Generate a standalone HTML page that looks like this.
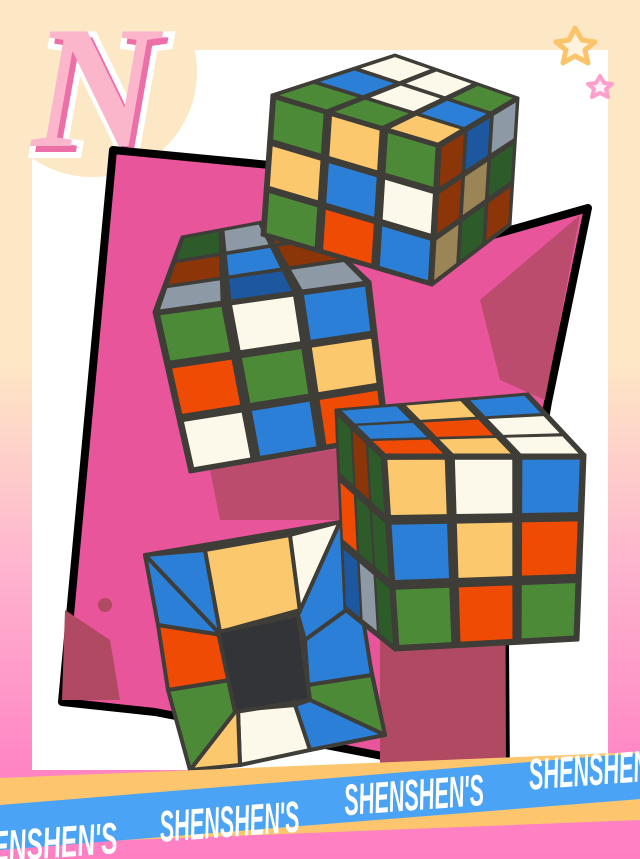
<!DOCTYPE html><html><head><meta charset="utf-8"><style>
html,body{margin:0;padding:0;width:640px;height:859px;overflow:hidden}
body{background:linear-gradient(#fde8c5 0%,#fde8c5 42%,#ffb6cf 65%,#ff84c4 90%,#ff7fc3 100%);position:relative;font-family:"Liberation Sans",sans-serif}
svg{position:absolute;left:0;top:0}
</style></head><body>
<svg id="s" width="640" height="859" viewBox="0 0 640 859">
<rect x="32" y="50" width="576" height="720" fill="#fff"/>
<g id="logo">
<circle cx="92" cy="72" r="105" fill="#fde8c5"/>
<text x="100" y="152" font-family="Liberation Serif,serif" font-style="italic" font-weight="bold" font-size="175" fill="#ec6fa7" text-anchor="middle" stroke="#fff" stroke-width="12" paint-order="stroke">N</text>
<text x="95" y="146" font-family="Liberation Serif,serif" font-style="italic" font-weight="bold" font-size="175" fill="#fbb6cb" text-anchor="middle">N</text>
</g>
<polygon points="575,28 582,40 595,42 585,50 588,63 575,56 563,63 566,50 556,42 569,40" fill="#fff3df" stroke="#fcc46a" stroke-width="5" stroke-linejoin="round"/>
<polygon points="600,76 604,83 612,84 606,89 608,97 600,93 592,97 594,89 588,84 596,83" fill="#fff3f8" stroke="#ff9fcb" stroke-width="4" stroke-linejoin="round"/>
<polygon points="113,150 270,165 440,250 588,208 548,402 505,645 506,780 155,712 62,702" fill="#e8559a" stroke="#000" stroke-width="8" stroke-linejoin="round"/>
<polygon points="380,460 505,460 506,780 380,770" fill="#b04a63"/>
<polygon points="480,300 580,215 545,400 500,380" fill="#b04a63" opacity=".8"/>
<polygon points="65,610 110,640 120,700 62,700" fill="#b04a63"/>
<circle cx="105" cy="605" r="7" fill="#b04a63"/>
<polygon points="210,470 390,440 380,520 220,520" fill="#b04a63" opacity=".8"/>
<g id="cubes"></g>
<polygon points="0,778 640,752 640,820 0,845" fill="#fdc66e"/>
<polygon points="0,805 640,753 640,799 0,850" fill="#4aa3f5"/>
<g transform="rotate(-4.2 320 800)" font-family="Liberation Sans,sans-serif" font-weight="bold" font-style="italic" font-size="44" fill="#fff">
<text x="-45" y="838" textLength="160" lengthAdjust="spacingAndGlyphs">SHENSHEN'S</text>
<text x="158" y="830" textLength="140" lengthAdjust="spacingAndGlyphs">SHENSHEN'S</text>
<text x="344" y="817" textLength="140" lengthAdjust="spacingAndGlyphs">SHENSHEN'S</text>
<text x="530" y="805" textLength="140" lengthAdjust="spacingAndGlyphs">SHENSHEN'S</text>
</g>
</svg>
<script>
var C={g:'#4d8a38',y:'#fbc86e',b:'#2b7fd6',w:'#fdf9ea',o:'#f04b05',r:'#8b3508',a:'#8d9aa6',d:'#2d5c2a',t:'#9b8455',B:'#1d57a0',k:'#333438'};
var out='';
function L(p,q,t){return[p[0]+(q[0]-p[0])*t,p[1]+(q[1]-p[1])*t]}
function P(a,b,c,d,u,v){var x=L(a,b,u),y=L(d,c,u);return L(x,y,v)}
function face(a,b,c,d,cols){
 out+='<polygon points="'+[a,b,c,d].map(function(p){return p.join(',')}).join(' ')+'" fill="#3f3d37" stroke="#3f3d37" stroke-width="3" stroke-linejoin="round"/>';
 for(var i=0;i<3;i++)for(var j=0;j<3;j++){var g=0.025;
  var pts=[P(a,b,c,d,j/3+g,i/3+g),P(a,b,c,d,(j+1)/3-g,i/3+g),P(a,b,c,d,(j+1)/3-g,(i+1)/3-g),P(a,b,c,d,j/3+g,(i+1)/3-g)];
  out+='<polygon points="'+pts.map(function(p){return p.join(',')}).join(' ')+'" fill="'+C[cols[i][j]]+'"/>';}
}
face([182,237],[300,215],[370,282],[154,312],['dar','rbr','aBa']);
face([154,312],[370,282],[388,438],[190,472],['gwb','ogy','wbo']);
face([395,55],[518,98],[440,145],[272,95],['wwg','bwb','ggy']);
face([272,95],[440,145],[432,285],[262,235],['gyg','ybw','gob']);
face([440,145],[518,98],[510,225],[432,285],['rBa','rtd','tdr']);
var A=[145,555],B=[340,522],Cc=[385,735],D=[190,770],a=[218,632],b=[298,615],c=[310,700],d=[235,712];
function poly(p,f){out+='<polygon points="'+p.map(function(q){return q.join(',')}).join(' ')+'" fill="'+f+'" stroke="#3f3d37" stroke-width="4" stroke-linejoin="round"/>'}
poly([A,B,Cc,D],'#3f3d37');
poly([A,[205,550],[220,632],a],C.b);poly([[205,550],[290,535],[300,610],[220,632]],C.y);poly([[290,535],B,b,[300,612]],C.w);
poly([B,[360,600],[305,640],b],C.b);poly([[360,600],[372,675],[308,685],[305,640]],C.b);poly([[372,675],Cc,c,[308,685]],C.g);
poly([Cc,[310,750],[295,705],c],C.b);poly([[310,750],[240,765],[238,710],[295,705]],C.w);poly([[240,765],D,d,[238,710]],C.y);
poly([D,[168,690],[230,680],d],C.g);poly([[168,690],[158,625],[222,635],[230,680]],C.o);poly([[158,625],A,a,[222,635]],C.b);
poly([a,b,c,d],C.k);
face([336,410],[528,394],[585,455],[382,455],['byb','bow','oyw']);
face([336,410],[382,455],[395,650],[345,610],['drd','odd','Bad']);
face([382,455],[585,455],[578,640],[395,650],['ywb','byo','gog']);
document.getElementById('cubes').innerHTML=out;
</script>
</body></html>
